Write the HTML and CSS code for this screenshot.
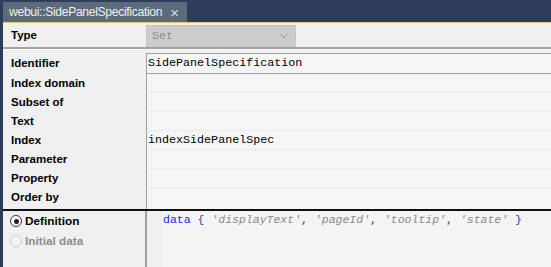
FILE: index.html
```html
<!DOCTYPE html>
<html>
<head>
<meta charset="utf-8">
<link rel="stylesheet" href="styles.css">
</head>
<body>
<div class="app">
  <div class="tabbar">
    <div class="tab"><span class="tab-title">webui::SidePanelSpecification</span><span class="tab-close">×</span></div>
  </div>
  <div class="form">
    <div class="row-type">
      <div class="label">Type</div>
      <div class="combo"><span>Set</span><svg class="chev" width="9" height="6" viewBox="0 0 9 6"><path d="M1 1 L4.5 4.5 L8 1" fill="none" stroke="#a8a8a8" stroke-width="1.2"/></svg></div>
    </div>
    <div class="sep"></div>
    <div class="row-ident">
      <div class="label">Identifier</div>
      <div class="input">SidePanelSpecification</div>
    </div>
    <div class="grid">
      <div class="labels">
        <div class="label">Index domain</div>
        <div class="label">Subset of</div>
        <div class="label">Text</div>
        <div class="label">Index</div>
        <div class="label">Parameter</div>
        <div class="label">Property</div>
        <div class="label">Order by</div>
      </div>
      <div class="values">
        <div class="val"></div>
        <div class="val"></div>
        <div class="val"></div>
        <div class="val">indexSidePanelSpec</div>
        <div class="val"></div>
        <div class="val"></div>
        <div class="val last"></div>
      </div>
    </div>
  </div>
  <div class="bottom">
    <div class="radios">
      <label class="radio"><span class="dot on"></span>Definition</label>
      <label class="radio disabled"><span class="dot"></span>Initial data</label>
    </div>
    <div class="gutter"></div>
    <div class="code"><span class="kw">data</span> <span class="br">{</span> <span class="str">'displayText'</span>, <span class="str">'pageId'</span>, <span class="str">'tooltip'</span>, <span class="str">'state'</span> <span class="br">}</span></div>
  </div>
</div>
</body>
</html>
```
FILE: styles.css
```css
html, body {
  margin: 0;
  padding: 0;
  width: 551px;
  height: 267px;
  overflow: hidden;
  background: #f0f0f0;
}
.app {
  height: 267px;
  border-left: 3px solid #2d3c59;
  box-sizing: border-box;
  display: flex;
  flex-direction: column;
  font-family: "Liberation Sans", Arial, sans-serif;
}
.tabbar {
  height: 22px;
  background: #2e3d5c;
  border-bottom: 1px solid #e8c96a;
  display: flex;
  align-items: flex-end;
  flex: none;
}
.tab {
  height: 20px;
  width: 184px;
  background: #5d6a7a;
  color: #eef0f3;
  display: flex;
  align-items: center;
  padding-left: 6px;
  box-sizing: border-box;
  font-family: "Liberation Sans", Arial, sans-serif;
  font-size: 12.2px;
}
.tab-title { letter-spacing: -0.35px; white-space: nowrap; }
.tab-close {
  margin-left: 8px;
  font-size: 15px;
  color: #d8dce2;
}
.label {
  font-weight: bold;
  font-size: 11.5px;
  color: #000;
  padding-left: 8px;
}
.form { flex: none; }
.row-type {
  display: flex;
  align-items: center;
  height: 24px;
}
.row-type .label { width: 135px; }
.combo {
  width: 150px;
  height: 22px;
  margin-top: 1px;
  background: #cccccc;
  border: 1px solid #c4c4c4;
  box-sizing: border-box;
  display: flex;
  align-items: center;
  justify-content: space-between;
  padding: 0 7px 0 5px;
  font-family: "Liberation Mono", monospace;
  font-size: 11.7px;
  color: #8a8a8a;
}
.sep {
  height: 2px;
  background: #a3a3a3;
  border-bottom: 1px solid #fafafa;
}
.row-ident {
  display: flex;
  align-items: center;
  height: 21px;
  margin-top: 2px;
}
.row-ident .label { width: 135px; }
.input {
  flex: 1;
  height: 19px;
  border-top: 1px solid #a0a0a0;
  border-left: 1px solid #a0a0a0;
  background: #f5f5f5;
  font-family: "Liberation Mono", monospace;
  font-size: 11.7px;
  line-height: 19px;
  padding-left: 1px;
}
.grid {
  display: flex;
}
.labels {
  width: 143px;
  padding-top: 1px;
}
.labels .label {
  height: 19px;
  line-height: 19px;
}
.values {
  flex: 1;
  border-top: 1px solid #a0a0a0;
  border-left: 1px solid #a0a0a0;
  background: #f5f5f5;
}
.val {
  height: 18px;
  border-bottom: 1px solid #ebebeb;
  font-family: "Liberation Mono", monospace;
  font-size: 11.7px;
  line-height: 18px;
  padding-left: 1px;
}
.val.last { border-bottom: none; height: 21px; }
.bottom {
  flex: 1;
  display: flex;
  border-top: 2px solid #111;
}
.radios {
  width: 142px;
  border-right: 2px solid #a0a0a0;
}
.radio {
  display: flex;
  align-items: center;
  height: 20px;
  padding-left: 7px;
  font-weight: bold;
  font-size: 11.8px;
}
.radio.disabled { color: #8c8c8c; }
.dot {
  width: 10px;
  height: 10px;
  border-radius: 50%;
  border: 1.5px solid #333;
  background: #fff;
  margin-right: 3px;
  position: relative;
  box-sizing: content-box;
}
.dot.on::after {
  content: "";
  position: absolute;
  left: 2.5px; top: 2.5px;
  width: 5px; height: 5px;
  border-radius: 50%;
  background: #222;
}
.radio.disabled .dot { border-color: #c8c8c8; background: #f4f4f4; }
.gutter { width: 16px; background: #f0f0f0; }
.code {
  flex: 1;
  background: #f4f4f4;
  font-family: "Liberation Mono", monospace;
  font-size: 11.5px;
  padding-top: 1px;
  line-height: 15px;
  color: #333;
  white-space: pre;
}
.kw { color: #1a1aff; }
.br { color: #3a3aa0; }
.str { color: #8a8a8a; font-style: italic; }
```
